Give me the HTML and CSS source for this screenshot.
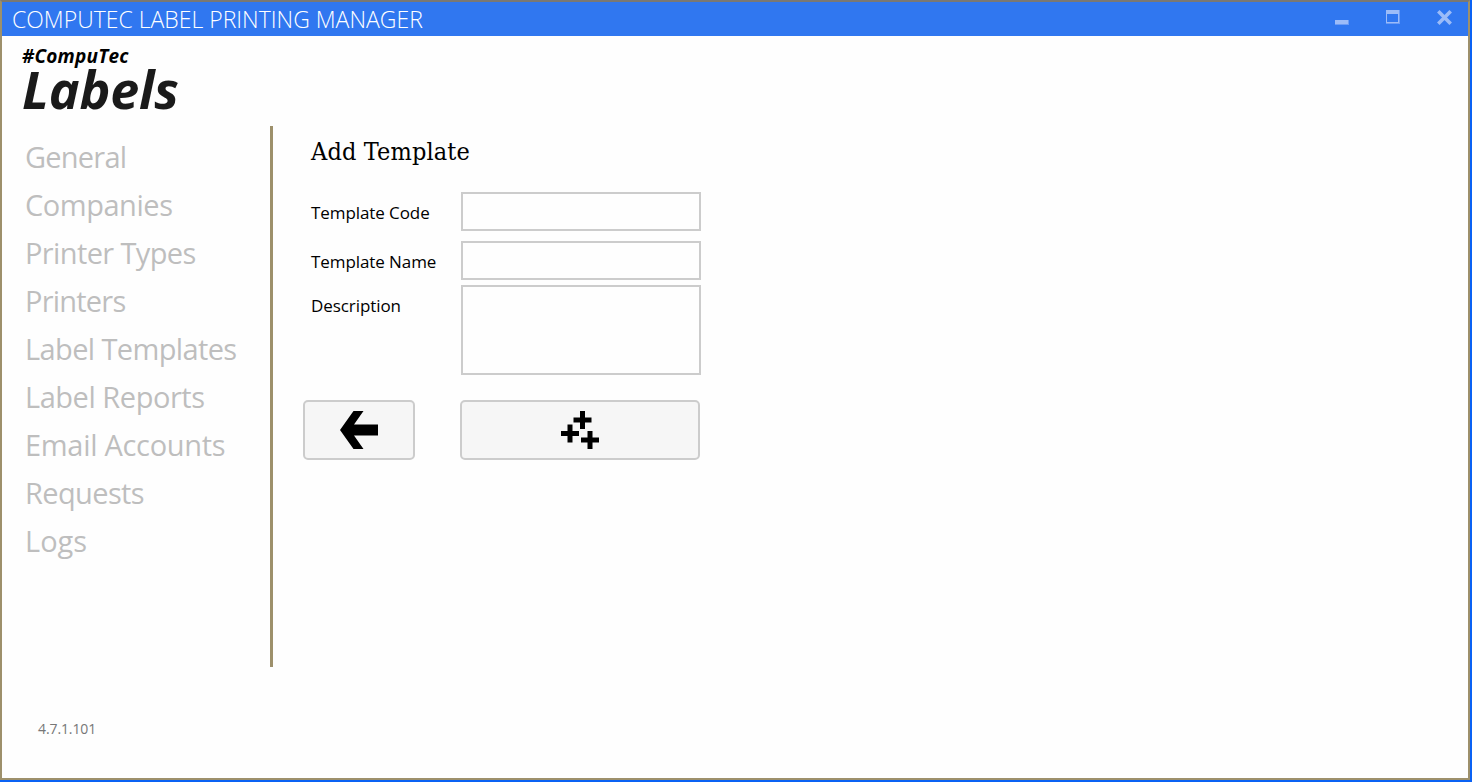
FILE: index.html
```html
<!DOCTYPE html>
<html lang="en">
<head>
<meta charset="utf-8">
<title>CompuTec Label Printing Manager</title>
<link rel="stylesheet" href="styles.css">
</head>
<body>
<div class="window">
  <header class="titlebar">
    <h1 class="title">COMPUTEC LABEL PRINTING MANAGER</h1>
    <svg class="controls" width="120" height="34" viewBox="0 0 120 34" fill="#9cbcf8" shape-rendering="crispEdges">
      <path d="M1 18h13v4H1z"/>
      <path fill="#6c9cf5" d="M1 22h14v1H1zM14 18h1v4h-1z"/>
      <path fill-rule="evenodd" d="M52 8h13v13H52zM53 12v8h11v-8z"/>
      <path fill="#6c9cf5" d="M52 21h14v1H52zM65 8h1v13h-1z"/>
      <path shape-rendering="auto" fill="none" stroke="#9cbcf8" stroke-width="3.600" d="M104.300 9.300l12.400 12.400M116.700 9.300L104.300 21.700"/>
    </svg>
  </header>
  <div class="brand">
    <span class="brand-top">#CompuTec</span>
    <span class="brand-name">Labels</span>
  </div>
  <div class="body">
    <nav class="nav">
      <a class="tightest">General</a>
      <a class="snug">Companies</a>
      <a class="tight">Printer Types</a>
      <a class="tightest">Printers</a>
      <a class="tight">Label Templates</a>
      <a class="snug">Label Reports</a>
      <a class="loose">Email Accounts</a>
      <a class="tight">Requests</a>
      <a>Logs</a>
    </nav>
    <main class="form">
      <h2 class="heading">Add Template</h2>
      <div class="row"><label for="code">Template Code</label><input id="code" class="field"></div>
      <div class="row"><label for="name">Template Name</label><input id="name" class="field"></div>
      <div class="row row-tall"><label for="desc">Description</label><textarea id="desc" class="field"></textarea></div>
      <div class="actions">
        <button class="btn back" aria-label="Back">
          <svg width="38" height="38" viewBox="0 0 38 38"><path d="M0 19L13.500 0H23.500L14 13.500H38V24.500H14L23.500 38H13.500z"/></svg>
        </button>
        <button class="btn add" aria-label="Add">
          <svg width="38" height="38" viewBox="0 0 38 38"><path d="M19 0h5v6.500h6.500v5H24V18h-5v-6.500h-6.500v-5H19zM6.500 13.500h5V20H18v5h-6.500v6.500h-5V25H0v-5h6.500zM26.500 20h5v6.500H38v5h-6.500V38h-5v-6.500H20v-5h6.500z"/></svg>
        </button>
      </div>
    </main>
  </div>
  <footer class="version">4.7.1.101</footer>
</div>
</body>
</html>
```
FILE: styles.css
```css
* { box-sizing: border-box; }

body {
  margin: 0;
  height: 782px;
  padding: 0 2px 2px 0;
  background: #0a62f4;
  font-family: "Open Sans", "Noto Sans", sans-serif;
  overflow: hidden;
}

.window {
  width: 1470px;
  height: 780px;
  display: flex;
  flex-direction: column;
  background: #fefefe;
  border: 2px solid #9d906b;
  border-top-color: #7a7874;
}

.titlebar {
  height: 34px;
  flex: none;
  display: flex;
  justify-content: space-between;
  padding: 0 14px 0 10px;
  background: #3077f0;
}

.title {
  margin: 0;
  font-size: 23px;
  font-weight: 300;
  line-height: 35px;
  color: #fff;
  white-space: nowrap;
}

.brand {
  height: 90px;
  flex: none;
  display: flex;
  flex-direction: column;
  padding: 10px 0 0 20px;
  font-style: italic;
  font-weight: 700;
}

.brand-top {
  font-size: 19px;
  line-height: 21px;
  letter-spacing: 0.2px;
  color: #000;
}

.brand-name {
  font-size: 52px;
  line-height: 44px;
  letter-spacing: -0.2px;
  color: #1a1a1a;
}

.body { display: flex; height: 541px; flex: none; }

.nav {
  width: 271px;
  display: flex;
  flex-direction: column;
  padding: 8px 0 0 23px;
  border-right: 3px solid #9d906b;
}

.nav a {
  height: 48px;
  font-size: 29px;
  line-height: 46px;
  color: #bebebe;
  white-space: nowrap;
}

.nav .loose { letter-spacing: -0.3px; }
.nav .snug { letter-spacing: -0.46px; }
.nav .tight { letter-spacing: -0.62px; }
.nav .tightest { letter-spacing: -0.78px; }

.form { padding: 0 0 0 38px; }

.heading {
  margin: 0;
  height: 66px;
  font-family: "DejaVu Serif Condensed", "DejaVu Serif", serif;
  font-size: 25px;
  font-weight: 400;
  line-height: 52px;
  letter-spacing: 0.15px;
  white-space: nowrap;
}

.row {
  display: flex;
  height: 39px;
  margin-bottom: 10px;
}

.row label {
  width: 150px;
  flex: none;
  font-size: 17px;
  line-height: 41px;
  letter-spacing: -0.08px;
  color: #000;
  white-space: nowrap;
}

.row-tall { height: 90px; margin: -5px 0 25px; }

.field {
  width: 240px;
  height: 100%;
  margin: 0;
  padding: 4px 8px;
  border: 2px solid #ccc;
  border-radius: 0;
  background: #fefefe;
  resize: none;
  outline: none;
}

.actions {
  display: flex;
  gap: 45px;
  margin-left: -8px;
}

.btn {
  height: 60px;
  padding: 0;
  display: flex;
  align-items: center;
  justify-content: center;
  border: 2px solid #ccc;
  border-radius: 5px;
  background: #f6f6f6;
}

.back { width: 112px; }
.add { width: 240px; }

.version {
  padding: 51px 0 0 36px;
  font-size: 14px;
  line-height: 22px;
  letter-spacing: -0.1px;
  color: #777;
}
```
